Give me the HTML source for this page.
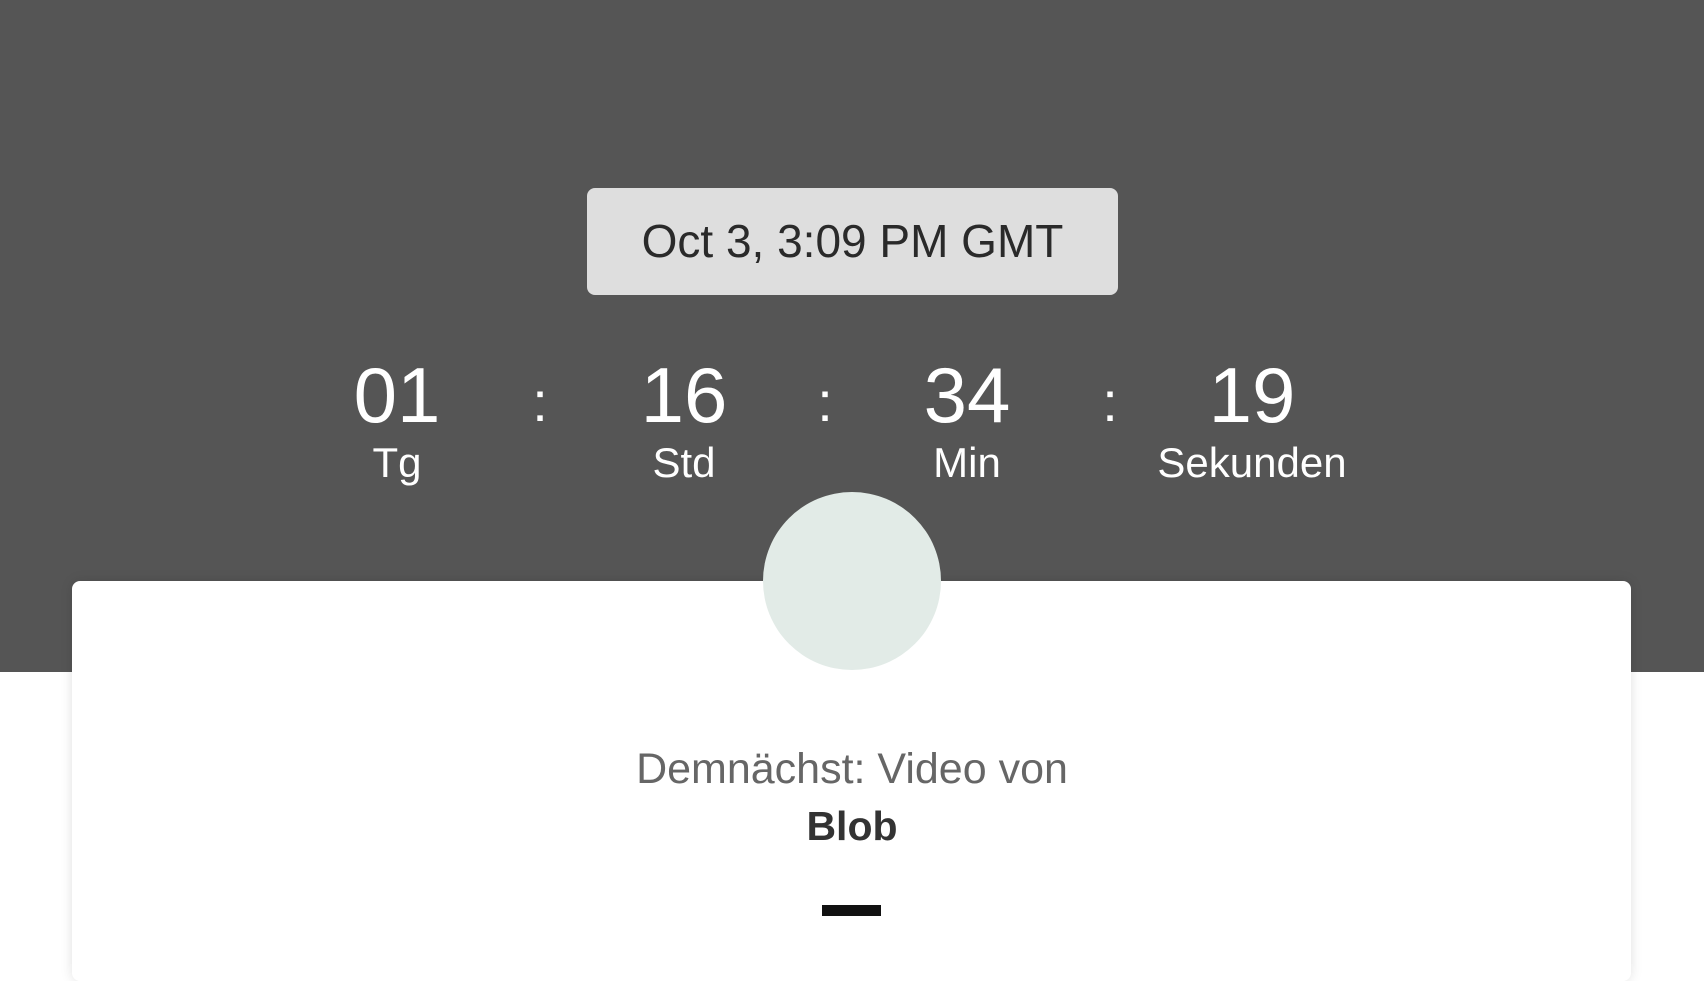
<!DOCTYPE html>
<html><head><meta charset="utf-8"><style>
html,body{margin:0;padding:0;width:1704px;height:960px;overflow:hidden;background:#fff;font-family:"Liberation Sans",sans-serif;}
.top{position:absolute;left:0;top:0;width:1704px;height:672px;background:#555555;}
.btn{position:absolute;left:587px;top:188px;width:531px;height:107px;background:#dedede;border-radius:8px;color:#2a2a2a;font-size:46px;text-align:center;line-height:107px;}
.col{position:absolute;width:300px;text-align:center;color:#fff;}
.num{position:absolute;top:350px;font-size:78px;font-weight:300;line-height:90px;}
.lab{position:absolute;top:437px;font-size:42px;line-height:52px;}
.colon{position:absolute;top:362px;font-size:56px;color:#fff;width:40px;text-align:center;line-height:80px;}
.card{position:absolute;left:72px;top:581px;width:1559px;height:400px;background:#fff;border-radius:8px;box-shadow:0 0 12px rgba(0,0,0,0.12);}
.circle{position:absolute;left:763px;top:492px;width:178px;height:178px;border-radius:50%;background:#e2ebe7;}
.t1{position:absolute;left:0;width:1704px;top:743px;text-align:center;font-size:43px;color:#666;line-height:52px;}
.t2{position:absolute;left:0;width:1704px;top:800px;text-align:center;font-size:41px;font-weight:bold;color:#333;line-height:52px;}
.dash{position:absolute;left:822px;top:905px;width:59px;height:11px;background:#111;}
</style></head><body>
<div class="top"></div>
<div class="btn">Oct 3, 3:09 PM GMT</div>
<div class="col num" style="left:247px">01</div>
<div class="col lab" style="left:247px">Tg</div>
<div class="col num" style="left:534px">16</div>
<div class="col lab" style="left:534px">Std</div>
<div class="col num" style="left:817px">34</div>
<div class="col lab" style="left:817px">Min</div>
<div class="col num" style="left:1102px">19</div>
<div class="col lab" style="left:1102px">Sekunden</div>
<div class="colon" style="left:520px">:</div>
<div class="colon" style="left:805px">:</div>
<div class="colon" style="left:1090px">:</div>
<div class="card"></div>
<div class="circle"></div>
<div class="t1">Demnächst: Video von</div>
<div class="t2">Blob</div>
<div class="dash"></div>
</body></html>
